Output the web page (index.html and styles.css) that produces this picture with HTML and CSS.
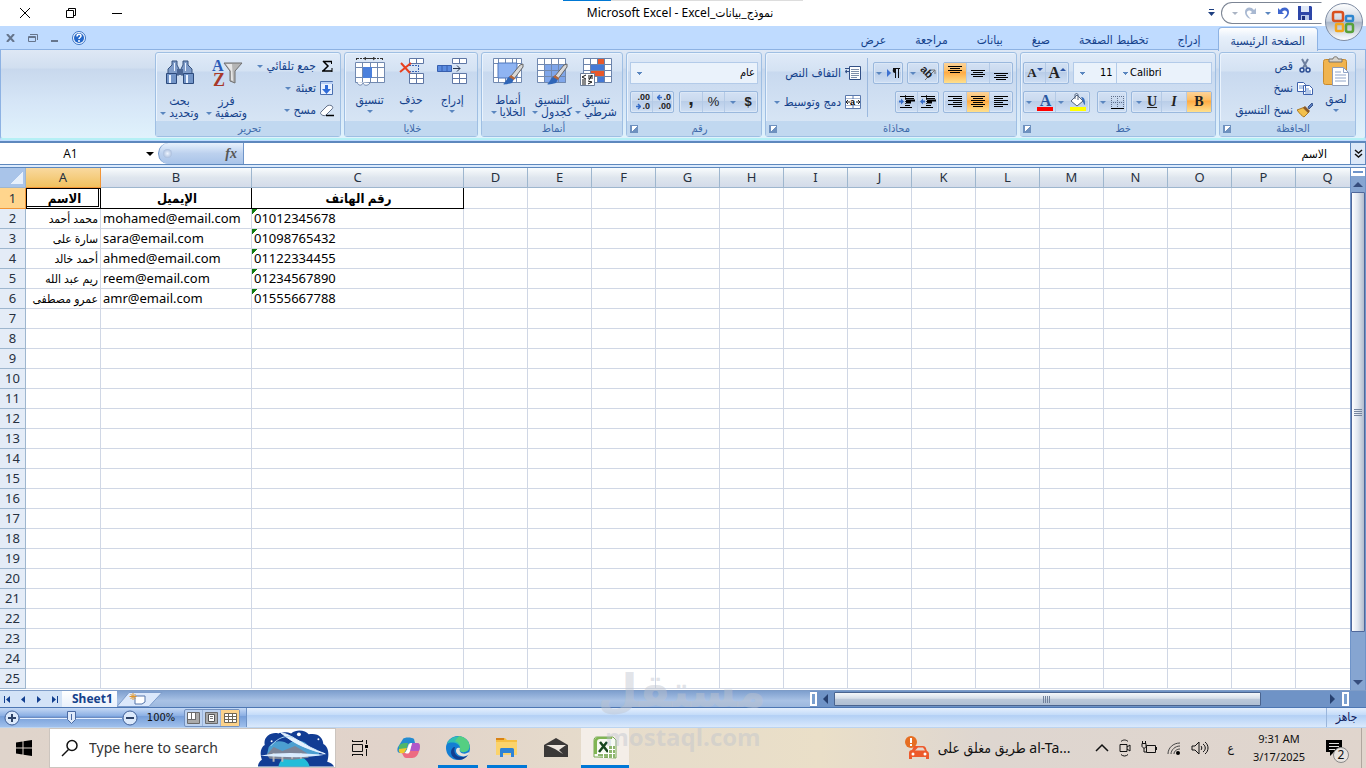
FILE: index.html
```html
<!DOCTYPE html>
<html lang="ar" dir="rtl">
<head>
<meta charset="utf-8">
<title>Microsoft Excel</title>
<link rel="stylesheet" href="styles.css">
</head>
<body>
<header class="titlebar">
  <div class="quick">
    <div class="quick-pill">
      <button class="bare" aria-label="حفظ"><svg width="14" height="14" viewBox="0 0 14 14"><path d="M0 0h13l1 1v13H0z" fill="#2d46a8"/><path d="M3 0h8v6H3z" fill="#dfe8f8"/><path d="M3 9h8v5H3z" fill="#b9c8ea"/><path d="M4 10h3v4H4z" fill="#1d2f7c"/></svg></button>
      <button class="bare" aria-label="تراجع"><svg width="13" height="13" viewBox="0 0 13 13"><path d="M1 1v6h6L5 5c3-3 6-1 5 2-1 2-2 3-4 5 4-1 6-4 6-7 0-5-6-6-9-2z" fill="#3f66cf"/></svg><i class="arrow"></i></button>
      <button class="bare" aria-label="إعادة"><svg width="13" height="13" viewBox="0 0 13 13"><path d="M12 1v6H6l2-2C5 2 2 4 3 7c1 2 2 3 4 5-4-1-6-4-6-7 0-5 6-6 9-2z" fill="#a9b9d2"/></svg><i class="arrow faint"></i></button>
    </div>
    <button class="bare" aria-label="تخصيص"><svg width="7" height="8" viewBox="0 0 7 8"><path d="M1 0h5v1H1zM0 3h7L3.500 7z" fill="#1e3f80"/></svg></button>
  </div>
  <h1 class="title" dir="ltr">Microsoft Excel - Excel_نموذج_بيانات</h1>
  <div class="window-buttons" dir="ltr">
    <button class="bare" aria-label="إغلاق"><svg width="12" height="12" viewBox="0 0 12 12"><path d="M1 1l10 10M11 1L1 11" stroke="#000" fill="none"/></svg></button>
    <button class="bare" aria-label="استعادة"><svg width="12" height="12" viewBox="0 0 12 12"><path d="M1.500 3.500h7v7h-7zM3.500 3v-1.500h7v7H9" stroke="#000" fill="none"/></svg></button>
    <button class="bare" aria-label="تصغير"><svg width="12" height="12" viewBox="0 0 12 12"><path d="M1 6.500h10" stroke="#000"/></svg></button>
  </div>
  <button class="orb" aria-label="زر Office"><svg width="40" height="40" viewBox="0 0 40 40"><defs><linearGradient id="og" x2="0" y2="1"><stop stop-color="#fff"/><stop offset=".48" stop-color="#c9d2df"/><stop offset=".5" stop-color="#a9b6c9"/><stop offset="1" stop-color="#fff"/></linearGradient></defs><circle cx="20" cy="20" r="18.500" fill="url(#og)" stroke="#7e8ca3"/><g fill="none" stroke-width="2.500"><rect x="9" y="10" width="10" height="9" rx="2" stroke="#d9501e"/><rect x="22" y="14" width="7" height="5" rx="1" stroke="#2f86cf"/><rect x="12" y="22" width="7" height="7" rx="1" stroke="#f3a61c"/><rect x="22" y="22" width="7" height="8" rx="2" stroke="#58a13a"/></g></svg></button>
</header>

<nav class="tabs">
  <button class="tab active">الصفحة الرئيسية</button>
  <button class="tab">إدراج</button>
  <button class="tab">تخطيط الصفحة</button>
  <button class="tab">صيغ</button>
  <button class="tab">بيانات</button>
  <button class="tab">مراجعة</button>
  <button class="tab">عرض</button>
  <div class="book-buttons" dir="ltr">
    <button class="bare" aria-label="إغلاق المصنف"><svg width="9" height="8" viewBox="0 0 9 8"><path d="M1 0l7 8M8 0L1 8" stroke="#66758c" stroke-width="2"/></svg></button>
    <button class="bare" aria-label="استعادة المصنف"><svg width="10" height="8" viewBox="0 0 10 8"><path d="M.5 2.500h7v5h-7zM.5 3.500h7M2 .5h7.500V6" stroke="#66758c" fill="none"/></svg></button>
    <button class="bare" aria-label="تصغير المصنف"><svg width="8" height="8" viewBox="0 0 8 8"><path d="M0 7h7" stroke="#66758c" stroke-width="2"/></svg></button>
    <button class="bare" aria-label="تعليمات"><svg width="14" height="14" viewBox="0 0 14 14"><circle cx="7" cy="7" r="6.500" fill="#f3f8ff" stroke="#3b73c2"/><circle cx="7" cy="7" r="5" fill="#2467c9"/><path d="M5 5.500c0-3 4-3 4-.5C9 6.500 7 6.500 7 8M7 9v2" stroke="#fff" stroke-width="1.500" fill="none"/></svg></button>
  </div>
</nav>

<section class="ribbon">
  <div class="group clipboard">
    <div class="body">
      <button class="big"><svg width="28" height="30" viewBox="0 0 28 30"><rect x="1.500" y="3.500" width="23" height="25" rx="2" fill="#f1b44e" stroke="#c98a2b"/><path d="M7 6V3h4c0-3 5-3 5 0h4v3z" fill="#d6d3cc" stroke="#77736b"/><path d="M10.500 11.500h11l5 5v13h-16z" fill="#fff" stroke="#8d9cb8"/><path d="M21.500 11.500v5h5M13 16h6M13 19h11M13 22h11M13 25h11" stroke="#8fa4c8" fill="none"/></svg><span>لصق</span><i class="arrow"></i></button>
      <div class="stack">
        <button class="small"><svg width="16" height="16" viewBox="0 0 16 16"><path d="M5 1l5 9M11 1L6 10" stroke="#6d7f9e" stroke-width="2"/><circle cx="5" cy="12" r="2" fill="none" stroke="#2b4d93" stroke-width="1.500"/><circle cx="11" cy="12" r="2" fill="none" stroke="#2b4d93" stroke-width="1.500"/></svg>قص</button>
        <button class="small"><svg width="16" height="16" viewBox="0 0 16 16"><path d="M.5 2.500h6l2 2v7h-8zM6.500 5.500h6l3 3v6h-9z" fill="#fff" stroke="#3e62ac"/><path d="M2 6h4M2 8h4M8 9h4M8 11h6M8 13h6" stroke="#6f97d6"/></svg>نسخ</button>
        <button class="small"><svg width="16" height="16" viewBox="0 0 16 16"><path d="M11 5l4-4 1 2-4 4z" fill="#5d7fbf" stroke="#35548f"/><path d="M0 8l8-3 4 5-5 5c-2-1-4-3-7-7z" fill="#f2c04c" stroke="#ad7a22"/><path d="M8 4l5 5-2 2-5-5z" fill="#8a5a2b"/></svg>نسخ التنسيق</button>
      </div>
    </div>
    <footer><span>الحافظة</span><button class="launch" aria-label="الحافظة"></button></footer>
  </div>

  <div class="group font">
    <div class="body rows">
      <div class="row">
        <select class="combo face" dir="ltr" aria-label="الخط"><option>Calibri</option></select>
        <select class="combo size" dir="ltr" aria-label="حجم الخط"><option>11</option></select>
        <div class="cluster push"><button aria-label="تكبير" class="glyph serif">A<svg width="6" height="12" viewBox="0 0 6 12"><path d="M0 4l3-3 3 3z" fill="#2d56a5"/></svg></button><button aria-label="تصغير" class="glyph serif less">A<svg width="6" height="12" viewBox="0 0 6 12"><path d="M0 1h6L3 4z" fill="#2d56a5"/></svg></button></div>
      </div>
      <div class="row">
        <div class="cluster"><button class="glyph serif on">B</button><button class="glyph serif italic">I</button><button class="glyph serif under"><u>U</u><i class="arrow"></i></button></div>
        <div class="cluster"><button aria-label="حدود"><svg width="13" height="13" viewBox="0 0 13 13"><path d="M.5 0v12M6.500 0v12M12.500 0v12M0 .5h13M0 6.500h13" stroke="#5f6f8b" stroke-dasharray="1 1"/><path d="M0 12.500h13" stroke="#000"/></svg><i class="arrow"></i></button></div>
        <div class="cluster push"><button aria-label="لون التعبئة"><svg width="18" height="18" viewBox="0 0 18 18"><path d="M2 8l6-6 6 6-6 5z" fill="#fff" stroke="#53637d"/><path d="M6 6V2c0-2 3-2 3 0v5" fill="none" stroke="#53637d"/><path d="M12 4c4 0 4 4 4 8-2-1-2-5-4-8z" fill="#356bb9"/><path d="M1 14h16v4H1z" fill="#ff0"/></svg><i class="arrow"></i></button><button aria-label="لون الخط" class="color-a"><b>A</b><i class="arrow"></i></button></div>
      </div>
    </div>
    <footer><span>خط</span><button class="launch" aria-label="خط"></button></footer>
  </div>

  <div class="group align">
    <div class="body rows">
      <div class="row">
        <div class="cluster third"><button aria-label="أسفل"><svg width="14" height="16" viewBox="0 0 14 16"><path d="M0 8.500h14M2 10.500h10M0 12.500h14M2 14.500h10" stroke="#000"/></svg></button><button aria-label="وسط"><svg width="14" height="16" viewBox="0 0 14 16"><path d="M0 5.500h14M2 7.500h10M0 9.500h14M2 11.500h10" stroke="#000"/></svg></button><button class="on" aria-label="أعلى"><svg width="14" height="16" viewBox="0 0 14 16"><path d="M0 1.500h14M2 3.500h10M0 5.500h14M2 7.500h10" stroke="#000"/></svg></button></div>
        <div class="cluster"><button aria-label="الاتجاه"><svg width="16" height="16" viewBox="0 0 16 16"><path d="M5 15L15 5M11 5h4v4" stroke="#777" fill="none"/><text x="0" y="10" transform="rotate(45 6 7)" font-family="Liberation Sans" font-size="11" font-weight="bold" fill="#222">ab</text></svg><i class="arrow"></i></button></div>
        <div class="cluster"><button aria-label="اتجاه النص"><svg width="14" height="12" viewBox="0 0 14 12"><path d="M1 2l4 4-4 4z" fill="#3d71d0"/><path d="M9.500 2v9M12.500 2v9M7 1.500h7" stroke="#111"/><path d="M9 1c-3 0-3 5 0 5z" fill="#111"/></svg><i class="arrow"></i></button></div>
      </div>
      <div class="row">
        <div class="cluster third"><button aria-label="يسار"><svg width="14" height="14" viewBox="0 0 14 14"><path d="M0 1.500h14M0 3.500h9M0 5.500h14M0 7.500h9M0 9.500h14M0 11.500h9" stroke="#000"/></svg></button><button class="on" aria-label="توسيط"><svg width="14" height="14" viewBox="0 0 14 14"><path d="M0 1.500h14M2 3.500h10M0 5.500h14M2 7.500h10M0 9.500h14M2 11.500h10" stroke="#000"/></svg></button><button aria-label="يمين"><svg width="14" height="14" viewBox="0 0 14 14"><path d="M0 1.500h14M5 3.500h9M0 5.500h14M5 7.500h9M0 9.500h14M5 11.500h9" stroke="#000"/></svg></button></div>
        <div class="cluster"><button aria-label="إنقاص المسافة"><svg width="16" height="14" viewBox="0 0 16 14"><path d="M6.500 0v14" stroke="#333" stroke-dasharray="1 1"/><path d="M1 1.500h14M6 3.500h9M6 10.500h5M1 12.500h12" stroke="#000"/><path d="M7 5.500h9M7 7.500h5" stroke="#000" stroke-width="2"/><path d="M0 6.500l3-3v2h2v2H3v2z" fill="#356bc7"/></svg></button><button aria-label="زيادة المسافة"><svg width="16" height="14" viewBox="0 0 16 14"><path d="M6.500 0v14" stroke="#333" stroke-dasharray="1 1"/><path d="M1 1.500h14M6 3.500h9M6 10.500h5M1 12.500h12" stroke="#000"/><path d="M7 5.500h9M7 7.500h5" stroke="#000" stroke-width="2"/><path d="M5 6.500l-3-3v2H0v2h2v2z" fill="#356bc7"/></svg></button></div>
      </div>
    </div>
    <div class="wraps">
      <button class="small"><svg width="16" height="14" viewBox="0 0 16 14"><path d="M4.500.5h11v13h-11z" fill="#fff" stroke="#314f85"/><path d="M6 3.500h8M6 5.500h8M6 7.500h8M6 9.500h8M6 11.500h6" stroke="#7d8ea9"/><path d="M0 2.500h4M1 5.500h3M2 4l-2 1.500L2 7" stroke="#314f85" fill="none"/></svg>التفاف النص</button>
      <button class="small"><svg width="16" height="14" viewBox="0 0 16 14"><path d="M.5.5h15v13H.5zM.5 4h15M.5 10h15M8 0v4M8 10v4" fill="#fff" stroke="#5a79ad"/><path d="M1 4h14v6H1z" fill="#fff"/><path d="M1 7h4M3 5l-2 2 2 2M15 7h-4M13 5l2 2-2 2" stroke="#222" fill="none"/><text x="5" y="10" font-family="Liberation Sans" font-size="9" font-weight="bold">a</text></svg>دمج وتوسيط<i class="arrow"></i></button>
    </div>
    <footer><span>محاذاة</span><button class="launch" aria-label="محاذاة"></button></footer>
  </div>

  <div class="group number">
    <div class="body rows">
      <div class="row"><select class="combo general" aria-label="تنسيق الأرقام"><option>عام</option></select></div>
      <div class="row">
        <div class="cluster"><button class="glyph">$<i class="arrow"></i></button><button class="glyph plain">%</button><button class="glyph comma">,</button></div>
        <div class="cluster push"><button class="decimals" dir="ltr" aria-label="زيادة المنازل"><span><svg width="5" height="7" viewBox="0 0 5 7"><path d="M5 3.500H1M3 1L.5 3.500 3 6" stroke="#356bc7" stroke-width="1.500" fill="none"/></svg>.0</span><span>.00</span></button><button class="decimals" dir="ltr" aria-label="إنقاص المنازل"><span>.00</span><span><svg width="5" height="7" viewBox="0 0 5 7"><path d="M0 3.500h4M2 1l2.500 2.500L2 6" stroke="#356bc7" stroke-width="1.500" fill="none"/></svg>.0</span></button></div>
      </div>
    </div>
    <footer><span>رقم</span><button class="launch" aria-label="رقم"></button></footer>
  </div>

  <div class="group styles">
    <div class="body">
      <button class="big"><svg width="32" height="30" viewBox="0 0 32 30"><path d="M3.500 1.500h28v24h-28zM3.500 7.500h28M3.500 13.500h28M3.500 19.500h28M10.500 1v24M17.500 1v24M24.500 1v24" fill="#fff" stroke="#6b83ab"/><path d="M18 2h6v5h-6zM11 14h13v5H11z" fill="#e8582b"/><path d="M11 8h13v5H11zM18 20h6v5h-6z" fill="#4479d6"/><path d="M.5 16.500h14v12H.5z" fill="#fff" stroke="#6b7d99"/><path d="M6 18l-4 2 4 2M2 23h4M8 19h5M8 21h5M12 18l-3 5M8 24l4 1-4 2M2 25h4M2 27h4" stroke="#111" fill="none"/></svg><span>تنسيق</span><span>شرطي<i class="arrow"></i></span></button>
      <button class="big"><svg width="32" height="30" viewBox="0 0 32 30"><path d="M1.500 1.500h28v24h-28z" fill="#fff"/><path d="M9 8h21v18H9z" fill="#7fa6ea"/><path d="M1.500 1.500h28v24h-28zM1 7.500h28M1 13.500h28M1 19.500h28M8.500 1v24M15.500 1v24M22.500 1v24" fill="none" stroke="#7189b0"/><path d="M28 8l3-1v3l-9 12-3-3z" fill="#d8d8d8" stroke="#666"/><path d="M18 19l4 3-2 4c-4 1-8 2-9 1 3-1 3-6 7-8z" fill="#2f66b8"/><path d="M19 18l4 3-1 2-5-3z" fill="#b5663a"/></svg><span>التنسيق</span><span>كجدول<i class="arrow"></i></span></button>
      <button class="big"><svg width="32" height="30" viewBox="0 0 32 30"><path d="M1.500 1.500h28v24h-28zM1 6.500h28M1 20.500h28M6.500 1v24M13.500 1v5M20.500 1v5M24.500 1v24M13.500 20v5" fill="#fff" stroke="#7189b0"/><path d="M6 6h19v15H6z" fill="#8fb4f2" stroke="#4f77bd"/><path d="M28 8l3-1v3l-9 12-3-3z" fill="#d8d8d8" stroke="#666"/><path d="M18 19l4 3-2 4c-4 1-8 2-9 1 3-1 3-6 7-8z" fill="#2f66b8"/><path d="M19 18l4 3-1 2-5-3z" fill="#b5663a"/></svg><span>أنماط</span><span>الخلايا<i class="arrow"></i></span></button>
    </div>
    <footer><span>أنماط</span></footer>
  </div>

  <div class="group cells">
    <div class="body">
      <button class="big"><svg width="32" height="30" viewBox="0 0 32 30"><path d="M16.500 1.500h14v5h-14zM23.500 1v5M16.500 16.500h14v10h-14zM16.500 21.500h14M23.500 16v10" fill="#fff" stroke="#5f77a5"/><path d="M1.500 8.500h14v6h-14z" fill="#5a8be0" stroke="#375fae"/><path d="M6 8v6M11 8v6" stroke="#375fae"/><path d="M17 11.500h7M21 8.500l3 3-3 3" stroke="#27364f" fill="none"/></svg><span>إدراج</span><i class="arrow"></i></button>
      <button class="big"><svg width="32" height="30" viewBox="0 0 32 30"><path d="M14.500 1.500h14v5h-14zM21.500 1v5M14.500 16.500h14v10h-14zM14.500 21.500h14M21.500 16v10" fill="#fff" stroke="#5f77a5"/><path d="M14 8.500h10M14 14.500h10M23.500 8v7" stroke="#3560b5" stroke-dasharray="2 1"/><path d="M6 6l9 10M16 6L5 15" stroke="#e8401f" stroke-width="2"/></svg><span>حذف</span><i class="arrow"></i></button>
      <button class="big"><svg width="32" height="30" viewBox="0 0 32 30"><path d="M2.500 1v3M28.500 1v3M3 1.500h8M20 1.500h8" stroke="#333" stroke-dasharray="2 1"/><path d="M9 1.500h12M12 0l-2 1.500L12 3M19 0l2 1.500L19 3" stroke="#333" fill="none"/><path d="M1.500 5.500h29v20h-29zM1 10.500h29M1 20.500h29M8.500 5v20M23.500 5v20M16.500 5v5M16.500 20v5" fill="#fff" stroke="#7189b0"/><path d="M9 10h9v11H9z" fill="#4b80dc"/><path d="M3 25c1 4 5 4 6 1 1 3 5 3 7 0" fill="#fff" stroke="#7189b0"/></svg><span>تنسيق</span><i class="arrow"></i></button>
    </div>
    <footer><span>خلايا</span></footer>
  </div>

  <div class="group editing">
    <div class="body">
      <div class="stack">
        <button class="small"><svg width="14" height="14" viewBox="0 0 14 14"><path d="M3 2.500h9M3 2l5 5-5 5M2 12h10" stroke="#000" stroke-width="1.500" fill="none"/><path d="M11.500 2v3M12 9v4" stroke="#000"/></svg>جمع تلقائي<i class="arrow"></i></button>
        <button class="small"><svg width="14" height="16" viewBox="0 0 14 16"><path d="M.5 1.500h12v13H.500z" fill="#e9f1ff" stroke="#4a6faf"/><path d="M1 2h12v2H1z" fill="#b9cff5"/><path d="M5 5h3v4h3l-4.500 5L2 9h3z" fill="#2f6bd8"/></svg>تعبئة<i class="arrow"></i></button>
        <button class="small"><svg width="14" height="14" viewBox="0 0 14 14"><path d="M1 9l6-6c1-1 4-1 5 0 1 1 1 2 0 3l-6 6c-2 2-7-1-5-3z" fill="#fff" stroke="#62708a"/><path d="M6 12.500h8" stroke="#000" stroke-width="1.500"/></svg>مسح<i class="arrow"></i></button>
      </div>
      <button class="big"><svg width="32" height="30" viewBox="0 0 32 30"><text x="1" y="13" font-family="Liberation Serif" font-size="16" font-weight="bold" fill="#2b5cb8">A</text><text x="2" y="28" font-family="Liberation Serif" font-size="18" font-weight="bold" fill="#a8382a">Z</text><path d="M13 5h18l-7 8v12l-5-2V13z" fill="#b5b5b5" stroke="#6f6f6f"/><path d="M15 6h6l1 17-2-1v-9z" fill="#e6e6e6"/></svg><span>فرز</span><span>وتصفية<i class="arrow"></i></span></button>
      <button class="big"><svg width="28" height="28" viewBox="0 0 28 28"><path d="M6 2h5v4l2 4v6H2v-6l4-4zM17 2h5v4l4 4v6H15v-6l2-4z" fill="#7f9cc9" stroke="#36527f"/><path d="M11 10h6v6h-6z" fill="#4b6796"/><path d="M.5 14.500h10v10H.500zM17.500 14.500h10v10h-10z" fill="#7395c8" stroke="#2c4a7c"/><path d="M3 16h2v8H3zM20 16h2v8h-2zM8 4h1v8H8zM19 4h1v8h-1z" fill="#e9f2ff"/></svg><span>بحث</span><span>وتحديد<i class="arrow"></i></span></button>
    </div>
    <footer><span>تحرير</span></footer>
  </div>
</section>

<section class="formula" dir="ltr">
  <input class="name" value="A1" aria-label="مربع الاسم">
  <button class="name-arrow" aria-label="الأسماء"></button>
  <div class="fx"><i class="knob"></i><button class="bare" aria-label="إدراج دالة"><em>fx</em></button></div>
  <input class="entry" dir="rtl" value="الاسم" aria-label="شريط الصيغة">
  <button class="expand" aria-label="توسيع"><svg width="9" height="10" viewBox="0 0 9 10"><path d="M1 1l3.500 3L8 1M1 5l3.500 3L8 5" stroke="#111" stroke-width="1.500" fill="none"/></svg></button>
</section>

<main class="sheet" dir="ltr">
  <div class="grid">
    <table>
      <colgroup><col class="c-head"><col class="c-a"><col class="c-b"><col class="c-c"><col span="14" class="c-n"></colgroup>
      <thead><tr><th class="corner"></th><th class="picked">A</th><th>B</th><th>C</th><th>D</th><th>E</th><th>F</th><th>G</th><th>H</th><th>I</th><th>J</th><th>K</th><th>L</th><th>M</th><th>N</th><th>O</th><th>P</th><th>Q</th></tr></thead>
      <tbody>
      <tr class="heads"><th class="picked">1<td class="cursor">الاسم<td>الإيميل<td>رقم الهاتف<td><td><td><td><td><td><td><td><td><td><td><td><td><td>
      <tr><th>2<td class="who">محمد أحمد<td>mohamed@email.com<td class="flag">01012345678<td><td><td><td><td><td><td><td><td><td><td><td><td><td>
      <tr><th>3<td class="who">سارة على<td>sara@email.com<td class="flag">01098765432<td><td><td><td><td><td><td><td><td><td><td><td><td><td>
      <tr><th>4<td class="who">أحمد خالد<td>ahmed@email.com<td class="flag">01122334455<td><td><td><td><td><td><td><td><td><td><td><td><td><td>
      <tr><th>5<td class="who">ريم عبد الله<td>reem@email.com<td class="flag">01234567890<td><td><td><td><td><td><td><td><td><td><td><td><td><td>
      <tr><th>6<td class="who">عمرو مصطفى<td>amr@email.com<td class="flag">01555667788<td><td><td><td><td><td><td><td><td><td><td><td><td><td>
      <tr><th>7<td><td><td><td><td><td><td><td><td><td><td><td><td><td><td><td><td>
      <tr><th>8<td><td><td><td><td><td><td><td><td><td><td><td><td><td><td><td><td>
      <tr><th>9<td><td><td><td><td><td><td><td><td><td><td><td><td><td><td><td><td>
      <tr><th>10<td><td><td><td><td><td><td><td><td><td><td><td><td><td><td><td><td>
      <tr><th>11<td><td><td><td><td><td><td><td><td><td><td><td><td><td><td><td><td>
      <tr><th>12<td><td><td><td><td><td><td><td><td><td><td><td><td><td><td><td><td>
      <tr><th>13<td><td><td><td><td><td><td><td><td><td><td><td><td><td><td><td><td>
      <tr><th>14<td><td><td><td><td><td><td><td><td><td><td><td><td><td><td><td><td>
      <tr><th>15<td><td><td><td><td><td><td><td><td><td><td><td><td><td><td><td><td>
      <tr><th>16<td><td><td><td><td><td><td><td><td><td><td><td><td><td><td><td><td>
      <tr><th>17<td><td><td><td><td><td><td><td><td><td><td><td><td><td><td><td><td>
      <tr><th>18<td><td><td><td><td><td><td><td><td><td><td><td><td><td><td><td><td>
      <tr><th>19<td><td><td><td><td><td><td><td><td><td><td><td><td><td><td><td><td>
      <tr><th>20<td><td><td><td><td><td><td><td><td><td><td><td><td><td><td><td><td>
      <tr><th>21<td><td><td><td><td><td><td><td><td><td><td><td><td><td><td><td><td>
      <tr><th>22<td><td><td><td><td><td><td><td><td><td><td><td><td><td><td><td><td>
      <tr><th>23<td><td><td><td><td><td><td><td><td><td><td><td><td><td><td><td><td>
      <tr><th>24<td><td><td><td><td><td><td><td><td><td><td><td><td><td><td><td><td>
      <tr><th>25<td><td><td><td><td><td><td><td><td><td><td><td><td><td><td><td><td>
      </tbody>
    </table>
  </div>
  <div class="vscroll"><i class="split"></i><i class="up"></i><div class="vthumb"><i></i></div><i class="down"></i></div>
</main>

<section class="sheetbar" dir="ltr">
  <div class="steps">
    <button class="bare" aria-label="الأول"><svg width="7" height="7" viewBox="0 0 7 7"><path d="M0 0h1v7H0zM6 0v7L2 3.500z" fill="#123f8f"/></svg></button>
    <button class="bare" aria-label="السابق"><svg width="7" height="7" viewBox="0 0 7 7"><path d="M5 0v7L1 3.500z" fill="#123f8f"/></svg></button>
    <button class="bare" aria-label="التالي"><svg width="7" height="7" viewBox="0 0 7 7"><path d="M2 0v7l4-3.500z" fill="#123f8f"/></svg></button>
    <button class="bare" aria-label="الأخير"><svg width="7" height="7" viewBox="0 0 7 7"><path d="M6 0h1v7H6zM1 0v7l4-3.500z" fill="#123f8f"/></svg></button>
  </div>
  <button class="sheet-tab">Sheet1</button>
  <button class="bare new-tab" aria-label="ورقة جديدة"><svg width="46" height="15" viewBox="0 0 46 15"><path d="M0 14.500L12 .5h33l-13 14z" fill="#dbe8fb" stroke="#7d9ccb"/><path d="M18 4h10v6l-3 2h-7z" fill="#fff" stroke="#5575aa"/><path d="M16 1v7M12.500 4.500h7M13.500 2l5 5M18.500 2l-5 5" stroke="#e0962b"/></svg></button>
  <div class="spacer"></div>
  <div class="hscroll"><i class="hsplit"></i><i class="left"></i><div class="track"><div class="hthumb"><i></i></div></div><i class="right"></i><i class="hsplit"></i></div>
</section>

<section class="status" dir="ltr">
  <div class="zoomer">
    <button class="bare" aria-label="تكبير"><svg width="16" height="16" viewBox="0 0 16 16"><circle cx="8" cy="8" r="7" fill="#dce9fb" stroke="#3f5f98"/><path d="M4 8h8M8 4v8" stroke="#2e4368" stroke-width="2"/></svg></button>
    <svg class="slide" width="102" height="16" viewBox="0 0 102 16"><path d="M0 8.500h102" stroke="#e6f0ff"/><path d="M0 7.500h102" stroke="#6d8dc2"/><path d="M47.500 1.500h8v8l-4 4-4-4z" fill="#dfeafa" stroke="#4a6aa3"/><path d="M51.500 4v6" stroke="#4a6aa3"/></svg>
    <button class="bare" aria-label="تصغير"><svg width="16" height="16" viewBox="0 0 16 16"><circle cx="8" cy="8" r="7" fill="#dce9fb" stroke="#3f5f98"/><path d="M4 8h8" stroke="#2e4368" stroke-width="2"/></svg></button>
    <span class="percent">100%</span>
    <div class="views">
      <button aria-label="فواصل"><svg width="13" height="12" viewBox="0 0 13 12"><path d="M.5.5h12v11H.5z" fill="#fff" stroke="#6a6a6a"/><path d="M4.500 0v7M8.500 0v7M1 7.500h8" stroke="#6a6a6a"/><path d="M9 1h3v10H1V8h8z" fill="#aaa"/></svg></button>
      <button aria-label="تخطيط"><svg width="13" height="12" viewBox="0 0 13 12"><path d="M.5.5h12v11H.500z" fill="#aaa" stroke="#6a6a6a"/><path d="M3.500 2.500h6v7h-6z" fill="#fff" stroke="#555"/><path d="M5 4.500h3M5 6.500h3" stroke="#777"/></svg></button>
      <button class="on" aria-label="عادي"><svg width="13" height="12" viewBox="0 0 13 12"><path d="M.5 1.500h12v9H.500zM0 4.500h13M0 7.500h13M4.500 1v10M8.500 1v10" fill="#fff" stroke="#6d6555"/></svg></button>
    </div>
  </div>
  <div class="ready" dir="rtl">جاهز</div>
</section>

<footer class="taskbar" dir="ltr">
  <button class="task start" aria-label="Start"><svg width="16" height="16" viewBox="0 0 16 16"><path d="M0 2.500L6.500 1.500v6H0zM7.500 1.300L16 0v7.500H7.500zM0 8.500h6.500v6L0 13.500zM7.500 8.500H16V16l-8.500-1.300z"/></svg></button>
  <div class="search">
    <svg width="18" height="18" viewBox="0 0 18 18"><circle cx="11" cy="6.500" r="5" fill="none" stroke="#111" stroke-width="1.500"/><path d="M7.500 10.500L1 17" stroke="#111" stroke-width="1.500"/></svg>
    <input aria-label="Search" placeholder="Type here to search">
    <svg width="78" height="38" viewBox="0 0 80 38"><path d="M5 31C2 24 5 17 8 16 6 8 14 2 22 4c5-2 10-1 13 0 6-5 15-3 18 1 10-2 15 4 15 10 6 3 6 12 4 18 4 1 6 3 7 5H1c0-3 2-6 4-7z" fill="#123d94"/><path d="M12 18c6-8 15-7 20-3 8-7 19-3 22 4 7 0 10 4 10 8H10z" fill="#4c9fd0"/><path d="M22 38c1-7 8-11 16-11s14 4 16 11z" fill="#23bdd8"/><path d="M10 26l7-8 9 4 13-5 12 7 2 5-16 2-24-1z" fill="#7b8498"/><path d="M17 24v9M26 25v8M36 24v6M45 24v6" stroke="#b8b4b4" stroke-width="2"/><path d="M3 27c25-5 48-2 67-1-22 4-43 2-67 1z" fill="#d9ecff"/><path d="M24 3c12 2 24 14 46 22-16-4-32-10-46-22z" fill="#e5f3ff" stroke="#e5f3ff"/><path d="M14 17C22 8 29 6 37 8" stroke="#a9d4f2" fill="none"/><g fill="#fff"><circle cx="15" cy="12" r="1"/><circle cx="43" cy="5" r="2"/><circle cx="63" cy="10" r="1"/></g></svg>
  </div>
  <button class="task" aria-label="Task view"><svg width="18" height="18" viewBox="0 0 18 18"><path d="M1.500 5.500h10v7h-10zM1 2.500h11M1.500 1v2M11.500 1v2M1 15.500h11M1.500 15v2M11.500 15v2M15.500 1v4M15.500 10v7" fill="none" stroke="#111"/><path d="M14 6h3v3h-3z"/></svg></button>
  <button class="task" aria-label="Copilot"><svg width="24" height="22" viewBox="0 0 24 22"><path d="M6 2c1-2 9-2 11 0l1 4h-4c-3 0-3 3-4 6-1 3-3 4-5 4H3c-3 0-3-4-2-6z" fill="#238bd0"/><path d="M2 9c0 5 0 7 3 7 3 0 4-2 5-6l1-4C6 6 4 6 2 9z" fill="#50b768"/><path d="M2 12c-1 4 2 5 5 4l3-5z" fill="#f3c72e"/><path d="M18 6h2c4 0 3 5 2 8-1 4-3 7-7 7H9c-2 0-3-3-4-5h4c3 0 4-2 5-6z" fill="#ed6b82"/><path d="M15 6h5c4 0 3 5 2 8h-9z" fill="#b158c9"/><path d="M10 13c2-6 3-7 5-7l-2 8c-1 3-2 3-5 2z" fill="#fff"/></svg></button>
  <button class="task running" aria-label="Edge"><svg width="24" height="24" viewBox="0 0 24 24"><circle cx="12" cy="12" r="12" fill="#147ed3"/><path d="M1 8C4-1 17-2 22 6c4 7-1 11-6 10-3 0-4-2-2-4C14 7 5 5 1 8z" fill="#31bfb4"/><path d="M13 0c9 1 13 10 9 14-3 3-8 3-8-1 1-4-2-7-5-8z" fill="#54cf82"/><path d="M9 11c-3 8 5 13 13 8-5 8-17 5-17-3 0-3 2-5 4-5z" fill="#123f91"/><path d="M14 12c-5-2-6 6 1 8 3 1 6 0 8-2 1-2 0-2-2-1-4 2-9-1-7-5z" fill="#e7e3dc"/></svg></button>
  <button class="task running" aria-label="File Explorer"><svg width="24" height="22" viewBox="0 0 24 22"><path d="M1 3c0-2 1-2 2-2h7l2 2h10v15H1z" fill="#f6bf43"/><path d="M1 5h21v13H1z" fill="#fbd36c"/><path d="M1 1h8v2H1z" fill="#d98214"/><path d="M5 20v-7c0-2 1-2 2-2h10c2 0 2 1 2 2v7h-3v-4H8v4z" fill="#2e83d6"/></svg></button>
  <button class="task" aria-label="Mail"><svg width="24" height="20" viewBox="0 0 24 20"><path d="M0 7L12 0l12 7v12H0z" fill="#3b3938"/><path d="M2 7h20l-7 5 4 4-8-5z" fill="#eee7df"/></svg></button>
  <button class="task current" aria-label="Excel"><svg width="24" height="24" viewBox="0 0 24 24"><path d="M1 5c0-3 1-4 3-4h16l3 3v18l-19-1H1z" fill="#f7faf3" stroke="#78a954"/><path d="M1 6c0-3 2-5 5-5h13v2H7C5 3 4 4 4 6v12H1z" fill="#80b553"/><path d="M5 17h17v5L5 20zM15 10h7v7h-7z" fill="#8db56c"/><path d="M7 6l8 10M14 6L6 16" stroke="#17461e" stroke-width="2.500"/><path d="M4 17.500h18M10.500 17v5M15.500 9v13M19.500 9v13M15 13.500h7" stroke="#fff"/></svg></button>
  <div class="spacer"></div>
  <div class="news"><svg width="26" height="26" viewBox="0 0 26 26"><circle cx="7" cy="7" r="6" fill="#e66e22"/><path d="M7 3v5M7 9v2" stroke="#fff" stroke-width="2"/><path d="M5 18c0-2 1-3 3-3l2-4h9c3 0 3 3 4 5 2 1 2 2 2 4v4h-3v-2H8v2H5z" fill="#ed5a2c"/><path d="M14 12.500h5l2 3H11z" fill="#e4d8ce"/><circle cx="9" cy="19" r="1.500" fill="#fff"/><circle cx="21" cy="19" r="1.500" fill="#fff"/></svg><span>طريق مغلق على al-Ta...</span></div>
  <div class="tray">
    <svg width="14" height="10" viewBox="0 0 14 10"><path d="M1 8l6-6 6 6" stroke="#111" stroke-width="1.500" fill="none"/></svg>
    <svg width="12" height="18" viewBox="0 0 12 18"><path d="M2 2.500c2-2 5-2 7 0M2 15.500c2 2 5 2 7 0M1 5.500h7v7H1zM8 8l3-2v6l-3-2" stroke="#111" fill="none"/></svg>
    <svg width="16" height="14" viewBox="0 0 16 14"><path d="M5.500 4.500h9v7h-9zM15.500 6v3M1 2.500h4v3c0 2-3 2-4 0zM1.500 0v2M4.500 0v2M3 7v4h2" stroke="#111" fill="none"/></svg>
    <svg width="14" height="14" viewBox="0 0 14 14"><path d="M1 13C1 7 6 2 13 2M4 13c0-4 4-8 9-8M7 13c0-3 3-5 6-5" stroke="#444" fill="none"/><circle cx="11" cy="12" r="2"/></svg>
    <svg width="18" height="14" viewBox="0 0 18 14"><path d="M1 5h3l4-4v12L4 9H1zM10 5c1 1 1 3 0 4M12 3c3 2 3 6 0 8M14 1c4 3 4 9 0 12" stroke="#111" fill="none"/></svg>
    <span class="lang">ع</span>
  </div>
  <time class="clock"><span>9:31 AM</span><span>3/17/2025</span></time>
  <div class="notes"><svg width="16" height="16" viewBox="0 0 16 16"><path d="M0 0h16v12H8l-4 4v-4H0z"/><path d="M3 3.500h10M3 6.500h10M3 9.500h6" stroke="#ddd"/></svg><b>2</b></div>
</footer>
<div class="mark" aria-hidden="true"><span>مستقل</span><b>mostaql.com</b></div>
</body>
</html>
```
FILE: styles.css
```css
* { box-sizing: border-box; }
body {
  margin: 0;
  height: 100vh;
  display: flex;
  flex-direction: column;
  overflow: hidden;
  position: relative;
  font: 12px/14px "DejaVu Sans Condensed", "DejaVu Sans", sans-serif;
  color: #15428b;
  background: #bfdbff;
}
button, input, select { font: inherit; color: inherit; margin: 0; }
button { padding: 0; background: none; border: 0; display: flex; align-items: center; justify-content: center; }
svg { flex: none; display: block; direction: ltr; }
.spacer { flex: 1; }
.arrow { width: 0; height: 0; flex: none; border: 3px solid transparent; border-top-color: #5a86bf; border-bottom: 0; }
.faint { border-top-color: #aab4c4; }
.bare { gap: 6px; }

.titlebar {
  flex: none;
  height: 26px;
  display: grid;
  grid-template-columns: 1fr auto 1fr;
  align-items: center;
  position: relative;
  color: #000;
  background:
    linear-gradient(#0078d4, #0078d4) calc(50% - 96px) 0 / 48px 1px no-repeat,
    linear-gradient(#ddd, #ddd) calc(50% + 24px) 0 / 192px 1px no-repeat,
    #fff;
}
.quick { display: flex; align-items: center; gap: 6px; padding-right: 44px; }
.quick-pill {
  display: flex;
  align-items: center;
  gap: 8px;
  height: 22px;
  padding: 0 9px 0 10px;
  border: 1px solid #7c8594;
  border-right-color: transparent;
  border-radius: 11px 0 0 11px;
}
.title { margin: 0; font: 12px/20px "Noto Sans", "DejaVu Sans Condensed", sans-serif; padding-right: 6px; }
.window-buttons { display: flex; gap: 34px; padding-left: 19px; }
.orb { position: absolute; right: 2px; top: 2px; z-index: 3; }

.tabs { flex: none; height: 24px; display: flex; align-items: stretch; gap: 17px; padding: 1px 48px 0 0; border-bottom: 1px solid #8db2e3; }
.tab { padding: 4px 6px 0; }
.tab.active { padding: 2px 12px 0; margin: 0 0 -2px -6px; border: 1px solid #8db2e3; border-bottom: 0; border-radius: 4px 4px 0 0; background: linear-gradient(#fff, #e6effa 40%, #dbe6f4); z-index: 1; }
.book-buttons { margin-right: auto; display: flex; align-items: center; gap: 13px; padding-left: 6px; }

.ribbon {
  flex: none;
  height: 90px;
  display: flex;
  gap: 3px;
  padding: 2px 9px 1px 1px;
  border: 1px solid #8db2e3;
  border-top: 0;
  border-bottom: 2px solid #b4f0f5;
  border-radius: 0 0 4px 4px;
  background: linear-gradient(#dee8f5, #d1dff0 18px, #c8d8ed 19px, #d6e6f7 60%, #e0f2fc);
}
.group {
  display: grid;
  grid-template-columns: 1fr;
  grid-template-rows: minmax(0, 1fr) 15px;
  border: 1px solid #9fbfe3;
  border-radius: 3px;
  background: linear-gradient(#dfeaf8, #d4e2f3 18px, #c8d9ef 19px, #dbe8f6 100%);
  box-shadow: inset 1px 1px #eaf3fd;
}
.group footer { grid-column: 1 / -1; display: flex; align-items: center; background: #c1d8f0; color: #3e6aaa; padding-left: 3px; }
.group footer span { flex: 1; text-align: center; font-size: 11px; }
.launch { width: 8px; height: 8px; border: 1px solid #6e91bf; border-left-width: 2px; background: linear-gradient(135deg, #fff 50%, #6e91bf 50%); }
.body { display: flex; padding: 4px 4px 0; }
.clipboard { width: 137px; }
.font { width: 196px; }
.align { width: 252px; grid-template-columns: auto 1fr; }
.number { width: 136px; }
.styles { width: 142px; }
.cells { width: 134px; }
.editing { width: 186px; }
.big { flex: 1; flex-direction: column; justify-content: flex-start; line-height: 12px; white-space: nowrap; }
.big svg { height: 30px; margin-bottom: 7px; }
.big span { display: flex; align-items: center; gap: 3px; }
.big .arrow { margin-top: 4px; }
.big span .arrow { margin-top: 0; }
.stack { display: flex; flex-direction: column; }
.small { height: 22px; justify-content: flex-start; gap: 4px; white-space: nowrap; }
.clipboard .big { flex: 0 0 38px; }
.clipboard .body { padding: 3px 0 0; }
.clipboard .stack { padding-right: 4px; margin-top: -1px; }
.editing .body { padding: 2px 6px 0 0; }
.editing .stack { width: 84px; }
.editing .big { padding-top: 3px; }

.rows { flex-direction: column; gap: 7px; padding: 9px 3px 0; }
.row { display: flex; gap: 4px; }
.push { margin-right: auto; }
.cluster { display: flex; height: 22px; border: 1px solid #9ab8dd; border-radius: 2px; background: linear-gradient(#d3e1f4, #c9d9ee 45%, #b9cde8 46%, #cfdff4); box-shadow: inset 0 0 0 1px #dbe7f6; }
.cluster button { min-width: 21px; padding: 0 2px; gap: 4px; border-left: 1px solid #b4cae6; }
.cluster button:last-child { border-left: 0; }
.cluster .on { background: linear-gradient(#fcd399, #fdbd62 40%, #ffa942 45%, #fee08e); }
.third button { min-width: 22px; padding: 0 4px; }
.font .cluster button, .number .cluster button { padding: 0 2px; gap: 5px; min-width: 21px; }
.cluster .glyph { font: bold 13px/18px "Liberation Sans", sans-serif; color: #222; }
.cluster .serif { font-family: "Liberation Serif", serif; font-size: 14px; }
.cluster .glyph.plain { font-weight: normal; }
.cluster .glyph.comma { font-size: 20px; padding-bottom: 8px; }
.font .push .glyph { direction: ltr; gap: 0; font-size: 16px; }
.font .push .less { font-size: 13px; }
.font .cluster .on, .font .cluster .italic { min-width: 25px; }
.cluster .italic { font-style: italic; }
.font .cluster .under { min-width: 29px; }
.font .cluster .color-a b { border-bottom: 4px solid #f00; width: 16px; font: bold 16px/13px "Liberation Serif", serif; color: #29569f; }
.combo { height: 22px; appearance: none; border: 1px solid #b3cbe9; border-radius: 0; color: #000; font-size: 11px; background: conic-gradient(from -45deg at 50% 100%, #5a86bf 90deg, transparent 0) 5px 9px / 6px 3px no-repeat, #eaf2fb; }
.face { width: 96px; padding: 0 0 0 13px; }
.size { width: 44px; margin-right: -5px; padding: 0 0 0 26px; }
.general { width: 100%; padding: 0 2px 0 14px; }
.wraps { display: flex; flex-direction: column; gap: 7px; margin: 5px 2px 4px 0; padding: 4px 6px 0 0; border-right: 1px solid #9cb9de; }
.decimals { flex-direction: column; }
.number .cluster .decimals { gap: 0; padding: 0 2px; font: bold 9px/9px "Liberation Sans", sans-serif; color: #222; align-items: stretch; }
.decimals span { display: flex; align-items: center; justify-content: flex-end; gap: 1px; }
.number .cluster .glyph { min-width: 22px; }
.number .cluster .glyph:first-child { min-width: 33px; gap: 8px; }

.formula { flex: none; display: flex; height: 24px; margin-top: 1px; border: 1px solid #5e88bd; border-width: 2px 0 1px; background: #fff; }
.formula input { border: 0; outline: 0; background: #fff; color: #000; padding: 0; min-width: 0; }
.formula .name { width: 141px; text-align: center; font: 12px "Open Sans", sans-serif; }
.name-arrow { width: 17px; }
.name-arrow::before { content: ""; border: 4px solid transparent; border-top-color: #000; border-bottom: 0; }
.fx { width: 86px; display: flex; align-items: center; justify-content: space-between; padding: 0 6px 0 4px; border: 1px solid #6f95c9; border-width: 0 1px 0 1px; border-radius: 12px 0 0 12px; background: linear-gradient(#e8f1fd, #bcd1ee 50%, #a9c4e9); }
.knob { width: 9px; height: 9px; border-radius: 5px; background: radial-gradient(#eef5ff, #8fa8cf); }
.fx em { font: italic bold 14px "Liberation Serif", serif; color: #555; }
.formula .entry { flex: 1; padding-right: 23px; }
.expand { width: 16px; border: 1px solid #5e88bd; border-width: 0 1px; background: #dbe8f8; }

.sheet { flex: 1; min-height: 0; display: flex; margin-top: 2px; border-top: 1px solid #5e88bd; border-bottom: 1px solid #7e9cc7; color: #000; background: #fff; box-shadow: 0 -2px #dcebfd; }
.grid { flex: 1; overflow: hidden; min-width: 0; }
table { table-layout: fixed; width: 1360px; border-collapse: separate; border-spacing: 0; font: 13px/18px "Noto Sans", "DejaVu Sans Condensed", sans-serif; }
.c-head { width: 26px; }
.c-a { width: 75px; }
.c-b { width: 151px; }
.c-c { width: 212px; }
.c-n { width: 64px; }
th, td { height: 20px; padding: 0 0 1px; overflow: hidden; white-space: nowrap; border: 1px solid #d0d7e5; border-width: 0 1px 1px 0; }
td { padding-left: 2px; }
th { font-weight: normal; color: #27313f; border-color: #9eb6ce; background: #e4ecf7; }
thead th { background: linear-gradient(#f9fcfd, #dfe6ee 50%, #d3dbe9); }
thead .corner { background: linear-gradient(135deg, transparent 50%, #e7f0fc 50%) 11px 4px / 12px 12px no-repeat, #a9c4e9; }
.picked { background: #ffd58d; border-color: #f29536; }
thead .picked { background: linear-gradient(#f9d99f, #f1c15f); }
.heads td { font-weight: bold; text-align: center; }
.heads td:nth-child(-n+4) { border-color: #000; }
.heads .cursor { border: 1px solid #000; box-shadow: inset -1px -1px #fff, inset -2px -2px #000; }
.who { direction: rtl; text-align: right; padding: 0 2px 0 0; font-size: 12px; line-height: 16px; }
.flag { background: linear-gradient(135deg, #107c10 4px, transparent 4px); }
.vscroll { width: 16px; display: flex; flex-direction: column; align-items: center; gap: 4px; border: 1px solid #6f94c9; border-width: 0 1px; background: #86a5d1; }
.split { width: 14px; height: 8px; border: 2px solid #fff; border-width: 3px 2px; background: #6f94c9; }
.up { border: 5px solid transparent; border-top: 0; border-bottom-color: #364d7d; margin: 2px 0 1px; }
.down { border: 5px solid transparent; border-bottom: 0; border-top-color: #364d7d; margin-bottom: 5px; }
.vthumb { height: 440px; width: 14px; border: 1px solid #50689b; border-radius: 1px; display: flex; align-items: center; justify-content: center; background: linear-gradient(90deg, #fff, #dfe5ee 50%, #b2bccd); margin-bottom: auto; }
.vthumb i { width: 8px; height: 7px; background: repeating-linear-gradient(#77869f 0 1px, transparent 1px 2px); }

.sheetbar { flex: none; display: flex; height: 17px; background: linear-gradient(#7e9fce, #a9c2e5 60%, #9cb8de); border-bottom: 1px solid #4d77b3; }
.steps { width: 62px; display: flex; align-items: center; justify-content: space-around; background: #d3e3f7; }
.sheet-tab { padding: 0 4px 0 10px; font: bold 12px/16px "Noto Sans", sans-serif; background: linear-gradient(#fff, #e9f1fc); }
.hscroll { flex: 0 0 556px; display: flex; align-items: center; justify-content: space-between; padding-right: 17px; background: #6f93c6; }
.hsplit { width: 7px; height: 14px; border: 2px solid #fff; background: #7ba0cf; }
.left { border: 5px solid transparent; border-left: 0; border-right-color: #27406f; }
.right { border: 5px solid transparent; border-right: 0; border-left-color: #27406f; }
.track { flex: 1; display: flex; margin: 0 0 0 6px; }
.left { margin-left: 6px; }
.right { margin-right: 7px; }
.hthumb { width: 86%; height: 14px; border: 1px solid #4a648f; border-radius: 1px; display: flex; align-items: center; justify-content: center; background: linear-gradient(#f5f8fb, #d6dee9 45%, #bcc9da 50%, #b0bfd3); }
.hthumb i { width: 8px; height: 7px; background: repeating-linear-gradient(90deg, #71819b 0 1px, transparent 1px 2px); }

.status { flex: none; display: flex; justify-content: space-between; height: 20px; background: linear-gradient(#e4effd, #c5dcf9 35%, #b3d0f5 40%, #dae9fc); border-bottom: 1px solid #bcd4f0; }
.zoomer { width: 247px; display: flex; align-items: center; padding-left: 4px; background: linear-gradient(#c5d9f5, #8cb0e4 40%, #779fd9 45%, #a0c0ec); border-right: 1px solid #6f93c6; }
.percent { width: 46px; text-align: center; color: #111; font-size: 11px; }
.views { display: flex; height: 18px; border: 1px solid #7391bf; border-radius: 2px; background: #bed3f0; }
.views button { width: 18px; border-right: 1px solid #9cb5da; }
.views .on { background: #fcd28a; border: 0; }
.ready { width: 40px; text-align: center; border-left: 1px solid #9ab6dc; line-height: 19px; color: #111d60; }

.taskbar { flex: none; height: 40px; display: flex; align-items: stretch; color: #111; background: linear-gradient(90deg, #dfd4cb, #e1d3ca 30%, #e6dccb 45%, #eadfc8 60%, #ded6d0 72%, #e0d5cd); font: 12px/18px "Noto Sans", "DejaVu Sans Condensed", sans-serif; }
.task { width: 48px; margin-right: 1px; }
.task.running { border: solid #0078d7; border-width: 0 0 3px; width: 40px; margin: 0 5px 0 4px; padding-top: 3px; }
.task.current { background: #f4eee8; border-bottom: 3px solid #0078d7; padding-top: 3px; }
.search { width: 287px; display: flex; align-items: center; gap: 10px; padding: 0 0 0 11px; background: #fff; border: 1px solid #ccc5bf; }
.search input { flex: 1; min-width: 0; border: 0; outline: 0; padding: 0; background: none; font-size: 14px; }
.search input::placeholder { color: #333; opacity: 1; }
.news { display: flex; align-items: center; gap: 8px; font-size: 14px; margin-right: 24px; }
.tray { display: flex; align-items: center; gap: 10px; }
.lang { margin: 0 4px 0 9px; }
.clock { display: flex; flex-direction: column; justify-content: center; text-align: center; width: 82px; font-size: 11px; }
.notes { width: 42px; padding: 12px 0 0 6px; position: relative; border-right: 1px solid #b0a69f; margin-right: 4px; }
.notes b { position: absolute; left: 13px; top: 19px; width: 16px; height: 16px; border: 1px solid #888; border-radius: 8px; background: #e8e3df; text-align: center; font: 12px/14px "Noto Sans", sans-serif; }

.mark { position: absolute; left: 600px; bottom: 14px; width: 166px; text-align: center; color: rgb(190 195 205 / 45%); pointer-events: none; }
.mark span { display: block; font: bold 46px/58px "DejaVu Sans", sans-serif; }
.mark b { display: block; font: bold 24px/34px "Open Sans", sans-serif; }
```
